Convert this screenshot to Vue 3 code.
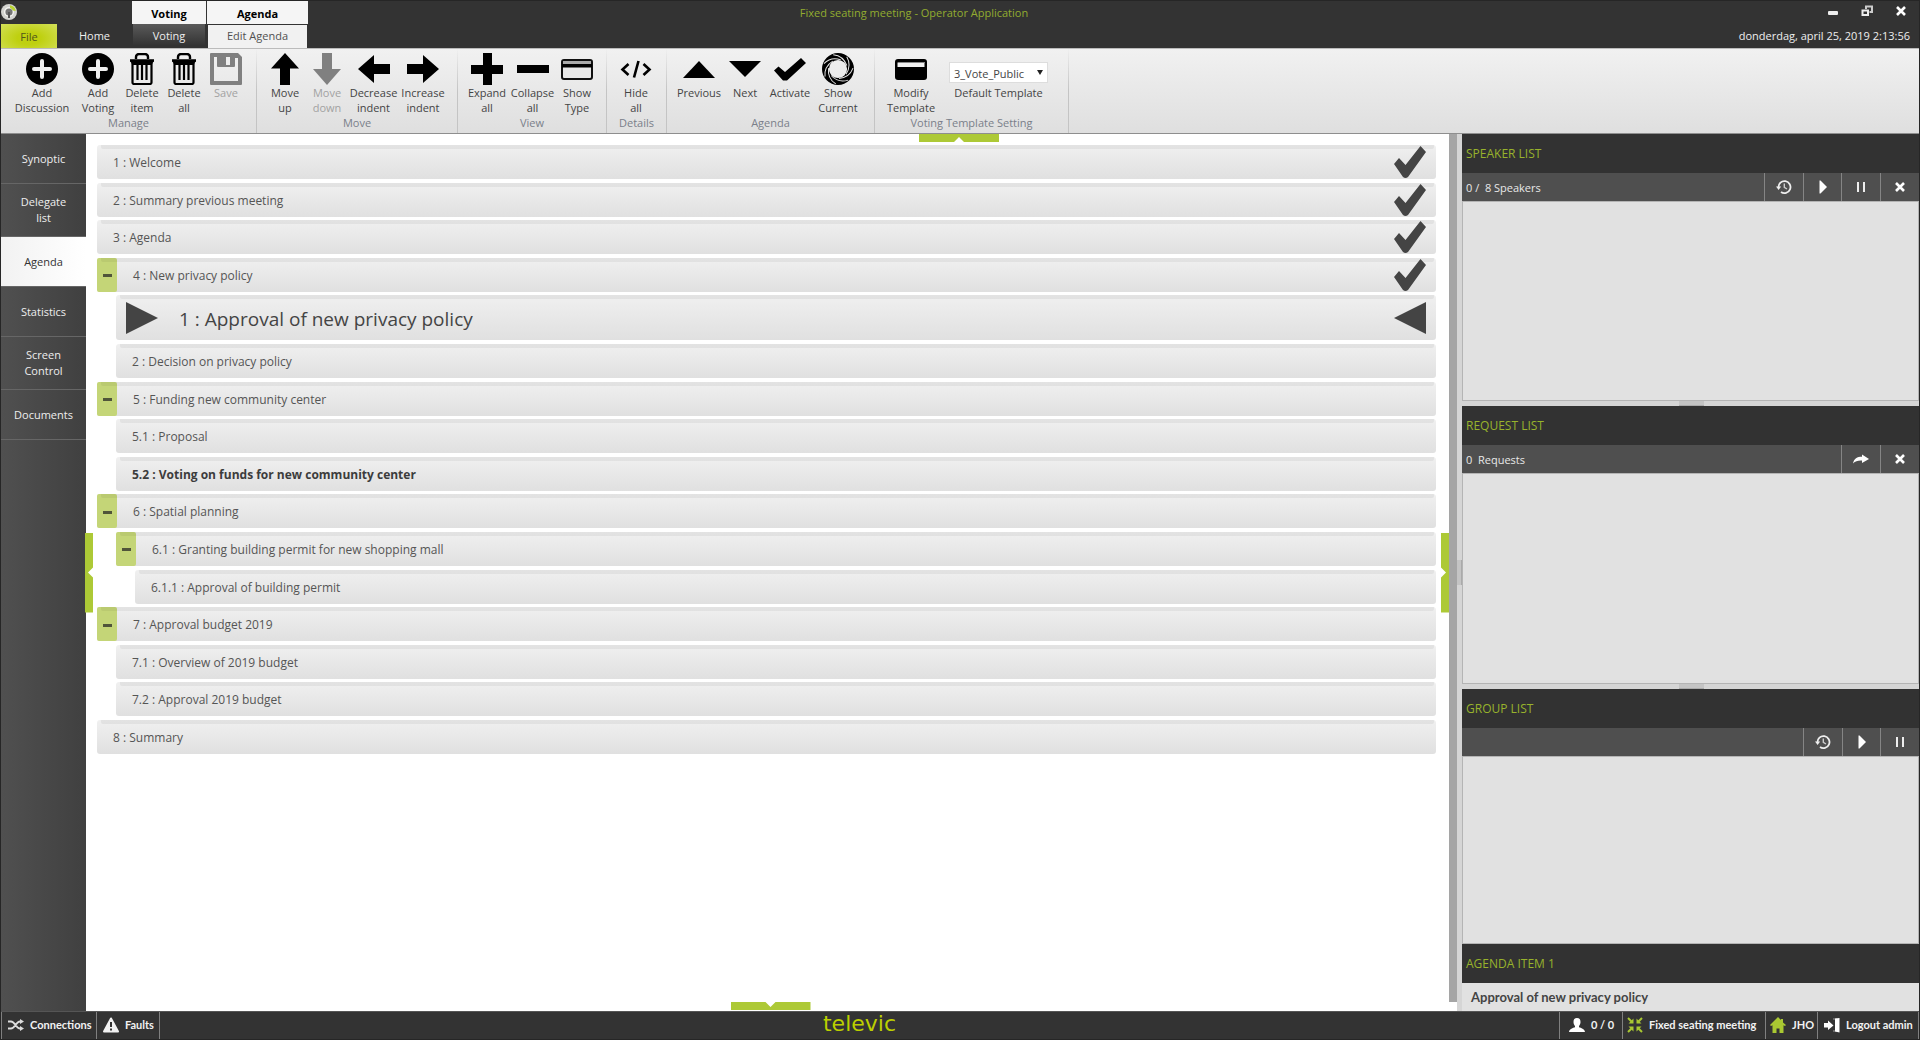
<script setup>
import { ref } from 'vue'

const template = ref('3_Vote_Public')

const groups = [
  {
    name: 'Manage',
    cls: 'manage',
    items: [
      { icon: 'add', lines: ['Add', 'Discussion'], w: 68 },
      { icon: 'add', lines: ['Add', 'Voting'], w: 44 },
      { icon: 'trash', lines: ['Delete', 'item'], w: 44 },
      { icon: 'trash', lines: ['Delete', 'all'], w: 40 },
      { icon: 'save', lines: ['Save'], w: 44, disabled: true },
    ],
  },
  {
    name: 'Move',
    cls: 'move',
    items: [
      { icon: 'up', lines: ['Move', 'up'], w: 42 },
      { icon: 'down', lines: ['Move', 'down'], w: 42, disabled: true },
      { icon: 'left', lines: ['Decrease', 'indent'], w: 51 },
      { icon: 'right', lines: ['Increase', 'indent'], w: 48 },
    ],
  },
  {
    name: 'View',
    cls: 'view',
    items: [
      { icon: 'plus', lines: ['Expand', 'all'], w: 44 },
      { icon: 'minus', lines: ['Collapse', 'all'], w: 47 },
      { icon: 'window', lines: ['Show', 'Type'], w: 42 },
    ],
  },
  { name: 'Details', cls: 'details', items: [{ icon: 'code', lines: ['Hide', 'all'], w: 44 }] },
  {
    name: 'Agenda',
    cls: 'agenda-group',
    items: [
      { icon: 'tri-up', lines: ['Previous'], w: 50 },
      { icon: 'tri-down', lines: ['Next'], w: 42 },
      { icon: 'check', lines: ['Activate'], w: 48 },
      { icon: 'swirl', lines: ['Show', 'Current'], w: 48 },
    ],
  },
]

const nav = [
  { label: 'Synoptic' },
  { label: 'Delegate list', tall: true },
  { label: 'Agenda', active: true },
  { label: 'Statistics' },
  { label: 'Screen Control', tall: true },
  { label: 'Documents' },
]

const rows = [
  { text: '1 : Welcome', level: 0, done: true },
  { text: '2 : Summary previous meeting', level: 0, done: true },
  { text: '3 : Agenda', level: 0, done: true },
  { text: '4 : New privacy policy', level: 0, done: true, parent: true },
  { text: '1 : Approval of new privacy policy', level: 1, current: true },
  { text: '2 : Decision on privacy policy', level: 1 },
  { text: '5 : Funding new community center', level: 0, parent: true },
  { text: '5.1 : Proposal', level: 1 },
  { text: '5.2 : Voting on funds for new community center', level: 1, bold: true },
  { text: '6 : Spatial planning', level: 0, parent: true },
  { text: '6.1 : Granting building permit for new shopping mall', level: 1, parent: true },
  { text: '6.1.1 : Approval of building permit', level: 2 },
  { text: '7 : Approval budget 2019', level: 0, parent: true },
  { text: '7.1 : Overview of 2019 budget', level: 1 },
  { text: '7.2 : Approval 2019 budget', level: 1 },
  { text: '8 : Summary', level: 0 },
]

const panels = [
  { title: 'SPEAKER LIST', cls: 'speakers', status: '0 /  8 Speakers', tools: ['history', 'play', 'pause', 'close'] },
  { title: 'REQUEST LIST', cls: 'requests', status: '0  Requests', tools: ['forward', 'close'] },
  { title: 'GROUP LIST', cls: 'groups', status: '', tools: ['history', 'play', 'pause'] },
]
</script>

<template>
  <svg class="sprite" aria-hidden="true">
    <symbol id="add" viewBox="0 0 32 32"><circle cx="16" cy="16" r="16" /><path d="M16 8v16M8 16h16" stroke="#eee" stroke-width="4" stroke-linecap="round" /></symbol>
    <symbol id="trash" viewBox="0 0 32 32">
      <path d="M10 6V4a3 3 0 0 1 3-3h6a3 3 0 0 1 3 3v2M4 7.500h24" fill="none" stroke="#000" stroke-width="2.400" />
      <path d="M6.500 11h19v18.500a1.500 1.500 0 0 1-1.500 1.500H8a1.500 1.500 0 0 1-1.500-1.500zM11.500 11v16M16 11v16M20.500 11v16" fill="none" stroke="#000" stroke-width="2.200" />
      <path d="M4 8l2 3h20l2-3z" />
    </symbol>
    <symbol id="save" viewBox="0 0 32 32"><path fill-rule="evenodd" d="M1 0h27l4 4v27a1 1 0 0 1-1 1H1a1 1 0 0 1-1-1V1a1 1 0 0 1 1-1zM4 4v24h24V5h-3v8a1 1 0 0 1-1 1H8a1 1 0 0 1-1-1V4zM16 4v8h4V4z" /></symbol>
    <symbol id="up" viewBox="0 0 32 32"><path d="M16 0l14 15.500h-9V32H11V15.500H2z" /></symbol>
    <symbol id="down" viewBox="0 0 32 32"><path d="M16 32L2 16h9V0h10v16h9z" /></symbol>
    <symbol id="left" viewBox="0 0 32 32"><path d="M0 16L16 2v9h16v10H16v9z" /></symbol>
    <symbol id="right" viewBox="0 0 32 32"><path d="M32 16L16 2v9H0v10h16v9z" /></symbol>
    <symbol id="plus" viewBox="0 0 32 32"><path d="M12 0h9v12h11v9H21v11h-9V21H0v-9h12z" /></symbol>
    <symbol id="minus" viewBox="0 0 32 32"><path d="M0 12h32v8H0z" /></symbol>
    <symbol id="window" viewBox="0 0 32 32"><rect x="1" y="7" width="30" height="19" rx="2" fill="#e9e9e9" stroke="#111" stroke-width="2" /><path d="M2 8h28v3H2z" fill="#aaa" /><path d="M1 11h30v3.500H1z" /></symbol>
    <symbol id="template" viewBox="0 0 32 32"><rect y="6" width="32" height="21" rx="3" /><path d="M2.500 9.500h27v4.500h-27z" fill="#f0f0f0" /><path d="M3 9h27v1H3z" fill="#888" /></symbol>
    <symbol id="code" viewBox="0 0 32 32"><path d="M8.500 11L2.500 16.500l6 5.500M23.500 11l6 5.500-6 5.500M18.500 8L14 24.500" fill="none" stroke="#000" stroke-width="2.600" /></symbol>
    <symbol id="tri-up" viewBox="0 0 32 32"><path d="M16 8l16 17H0z" /></symbol>
    <symbol id="tri-down" viewBox="0 0 32 32"><path d="M0 8h32L16 24z" /></symbol>
    <symbol id="check" viewBox="0 0 32 32"><path d="M0 17.500l4.500-4L11 19 27 5l5 5-19 17.500h-4z" /></symbol>
    <symbol id="done" viewBox="0 0 32 32"><path d="M0 18l5-6 6.500 7L26.500 0 32 6 14 31q-2.500 2-5 0z" /></symbol>
    <symbol id="swirl" viewBox="0 0 32 32">
      <circle cx="16" cy="16" r="13" fill="none" stroke="#000" stroke-width="6" />
      <circle cx="16" cy="16" r="9.800" fill="none" stroke="#000" stroke-width="1.400" />
      <g fill="none" stroke="#e4e4e4" stroke-width="1">
        <path v-for="n in 7" :key="n" d="M12 1.500Q22 3 25 13" :transform="`rotate(${n * 51} 16 16)`" />
      </g>
    </symbol>
    <symbol id="history" viewBox="0 0 16 16"><path d="M2.500 8.500A6 6 0 1 1 5 13" fill="none" stroke="#eee" stroke-width="1.800" /><path d="M0 7.500h5.200L2.600 11z" fill="#eee" /><path d="M8.300 4.500V8.300L11 10" fill="none" stroke="#ccc" stroke-width="1.400" /></symbol>
    <symbol id="play" viewBox="0 0 16 16"><path d="M4.500 1.500h1L12 8l-6.500 6.500h-1z" fill="#fff" /></symbol>
    <symbol id="pause" viewBox="0 0 16 16"><path d="M4 3h2v10H4zM10 3h2v10h-2z" fill="#eee" /></symbol>
    <symbol id="close" viewBox="0 0 16 16"><path d="M4 4l8 8M12 4l-8 8" stroke="#fff" stroke-width="2.600" /></symbol>
    <symbol id="forward" viewBox="0 0 16 16"><path d="M0 12.500C1 7.500 4 5.800 9 5.800V3.500l7 4.500-7 4V9.500C5 9.300 2.500 10 0 12.500z" fill="#fff" /></symbol>
    <symbol id="shuffle" viewBox="0 0 16 16"><path d="M0 4.500h3c4 0 5 7 9 7h1M0 11.500h3c4 0 5-7 9-7h1" fill="none" stroke="#ddd" stroke-width="1.800" /><path d="M12 2l4 2.500L12 7zM12 9l4 2.500-4 2.500z" fill="#ddd" /></symbol>
    <symbol id="warning" viewBox="0 0 16 16"><path d="M8 1.500L15 14.500H1z" fill="#f2f2f2" stroke="#f2f2f2" stroke-width="2" stroke-linejoin="round" /><path d="M8 5v5M8 11.500v2" stroke="#333" stroke-width="2" /></symbol>
    <symbol id="person" viewBox="0 0 16 16"><path d="M8 1c2.500 0 3.500 1.500 3.500 4 0 1.800-.7 3-1.500 4v1.200c2 .8 5.500 1.300 6 4.800H0c.5-3.500 4-4 6-4.800V9c-.8-1-1.500-2.200-1.500-4 0-2.500 1-4 3.500-4z" fill="#fff" /></symbol>
    <symbol id="shrink" viewBox="0 0 16 16"><path d="M1 1l4 4M15 1l-4 4M1 15l4-4M15 15l-4-4" stroke="#a9c832" stroke-width="2" /><path d="M6.500 1.500v5h-5zM9.500 1.500v5h5zM6.500 14.500v-5h-5zM9.500 14.500v-5h5z" fill="#a9c832" /></symbol>
    <symbol id="home" viewBox="0 0 16 16"><path d="M8 0l3 3V2h2v3.500L16 8l-1 1-1.500-.7V16h-4v-4.500h-3V16h-4V8.300L1 9 0 8z" fill="#a9c832" /></symbol>
    <symbol id="logout" viewBox="0 0 16 16"><path d="M0 6h4V3.500L9.500 8.500 4 13v-2.500H0z" fill="#fff" /><path d="M9 2h4v12H9" fill="none" stroke="#999" stroke-width="1" /><path d="M11 1.500L15.500 1v14.500L11 14.500z" fill="#fff" /></symbol>
  </svg>

  <div class="app">
    <header class="titlebar">
      <svg class="logo" viewBox="0 0 16 16"><circle cx="8" cy="8" r="8" fill="#d4d4d0" /><circle cx="8" cy="8" r="5" fill="#f4f4f0" /><path d="M9 1.200A7 7 0 0 1 14.800 7l-3-.5A4 4 0 0 0 9 4z" fill="#b8d432" /><circle cx="8" cy="8" r="3.600" fill="#777" /><path d="M7 8h2v6H7z" fill="#555" /></svg>
      <nav class="tabs">
        <button class="tab file">File</button>
        <button class="tab home">Home</button>
        <div class="context voting">
          <strong>Voting</strong>
          <button class="tab">Voting</button>
        </div>
        <div class="context agenda">
          <strong>Agenda</strong>
          <button class="tab">Edit Agenda</button>
        </div>
      </nav>
      <h1>Fixed seating meeting - Operator Application</h1>
      <div class="session">
        <div class="controls">
          <button aria-label="Minimize"><svg viewBox="0 0 12 12"><rect x="1" y="6" width="10" height="4" rx="1" fill="#eee" /></svg></button>
          <button aria-label="Restore"><svg viewBox="0 0 12 12"><path d="M5 4V1.500h6V7H8.500" fill="none" stroke="#ccc" stroke-width="2" /><path d="M1.500 5.500h5.500v4.500H1.500z" fill="#333" stroke="#eee" stroke-width="2" /></svg></button>
          <button aria-label="Close"><svg viewBox="0 0 12 12"><path d="M2 2l8 8M10 2l-8 8" stroke="#fff" stroke-width="2.600" /></svg></button>
        </div>
        <time>donderdag, april 25, 2019 2:13:56</time>
      </div>
    </header>

    <section class="ribbon">
      <div v-for="g in groups" :key="g.name" class="group" :class="g.cls">
        <div class="actions">
          <button v-for="a in g.items" :key="a.lines.join(' ')" class="action" :style="{ width: a.w + 'px' }" :disabled="a.disabled">
            <svg><use :href="'#' + a.icon" /></svg>
            <span v-for="l in a.lines" :key="l">{{ l }}</span>
          </button>
        </div>
        <div class="group-name">{{ g.name }}</div>
      </div>
      <div class="group setting">
        <div class="actions">
          <button class="action modify">
            <svg><use href="#template" /></svg>
            <span>Modify</span><span>Template</span>
          </button>
          <div class="picker">
            <div class="combo">
              <select id="default-template" v-model="template">
                <option>3_Vote_Public</option>
              </select>
              <svg viewBox="0 0 6 5"><path d="M0 0h6L3 5z" fill="#222" /></svg>
            </div>
            <label for="default-template">Default Template</label>
          </div>
        </div>
        <div class="group-name">Voting Template Setting</div>
      </div>
    </section>

    <div class="body">
      <nav class="sidebar">
        <button v-for="n in nav" :key="n.label" :class="{ tall: n.tall, active: n.active }"><span>{{ n.label }}</span></button>
      </nav>

      <main class="workspace">
        <ul class="list">
          <li v-for="r in rows" :key="r.text" class="row" :class="['level' + r.level, { current: r.current, bold: r.bold }]">
            <button v-if="r.parent" class="toggle" aria-label="Collapse"></button>
            <svg v-if="r.current" class="marker start" viewBox="0 0 32 32"><path d="M0 0l32 16L0 32z" /></svg>
            <span class="label">{{ r.text }}</span>
            <svg v-if="r.done" class="marker"><use href="#done" /></svg>
            <svg v-if="r.current" class="marker" viewBox="0 0 32 32"><path d="M32 0L0 16l32 16z" /></svg>
          </li>
        </ul>
        <button class="handle top" aria-label="Top panel"></button>
        <button class="handle bottom" aria-label="Bottom panel"></button>
        <button class="handle west" aria-label="Left panel"></button>
        <button class="handle east" aria-label="Right panel"></button>
      </main>

      <div class="scroll"></div>
      <div class="splitter"></div>

      <aside class="side">
        <section v-for="p in panels" :key="p.title" class="panel" :class="p.cls">
          <h2>{{ p.title }}</h2>
          <div class="toolbar">
            <span class="status">{{ p.status }}</span>
            <button v-for="t in p.tools" :key="t" :class="t" :aria-label="t"><svg><use :href="'#' + t" /></svg></button>
          </div>
          <div class="content"></div>
        </section>
        <section class="item">
          <h2>AGENDA ITEM 1</h2>
          <p>Approval of new privacy policy</p>
        </section>
      </aside>
    </div>

    <footer class="footer">
      <div class="links">
        <button class="connections"><svg><use href="#shuffle" /></svg>Connections</button>
        <button class="faults"><svg><use href="#warning" /></svg>Faults</button>
      </div>
      <span class="brand">televic</span>
      <div class="links right">
        <button class="count"><svg><use href="#person" /></svg>0 / 0</button>
        <button class="meeting"><svg><use href="#shrink" /></svg>Fixed seating meeting</button>
        <button class="user"><svg><use href="#home" /></svg>JHO</button>
        <button class="logout"><svg><use href="#logout" /></svg>Logout admin</button>
      </div>
    </footer>
  </div>
</template>

<style>
body { background: #262626; }
</style>

<style scoped>
* { box-sizing: border-box; }
button { margin: 0; padding: 0; border: 0; background: none; color: inherit; font: inherit; cursor: pointer; }
h1, h2, p, ul { margin: 0; padding: 0; font-weight: 400; list-style: none; }
svg { display: block; flex: none; }
.sprite { position: absolute; width: 0; height: 0; }
.app { display: flex; flex-direction: column; min-height: 100vh; padding: 1px; font: 11px/15px "Open Sans", "Noto Sans", sans-serif; color: #444; background: #262626; }

.titlebar { position: relative; display: flex; height: 47px; background: #333; color: #eee; }
.logo { position: absolute; left: 0; top: 3px; width: 16px; height: 16px; }
.tabs { display: flex; align-items: flex-end; }
.tab { height: 24px; padding-bottom: 2px; text-align: center; }
.file { width: 56px; padding: 0; color: #50551c; background: radial-gradient(ellipse at 50% 60%, #bfd010 30%, #d3e05a); }
.home { width: 75px; }
.context { display: flex; flex-direction: column; align-items: center; height: 47px; margin-right: 1px; }
.context strong { width: 100%; height: 23px; line-height: 26px; text-align: center; color: #000; background: #f5f5f5; }
.voting { width: 74px; }
.agenda { width: 101px; }
.voting .tab { width: 72px; background: linear-gradient(#5a5a5a, #333 90%); }
.agenda .tab { width: 99px; margin-top: 1px; height: 23px; color: #505050; background: #f1f1f1; }
h1 { flex: 1; font-size: 11px; line-height: 24px; text-align: center; color: #92ac30; }
.session { display: flex; flex-direction: column; align-items: flex-end; width: 400px; padding-right: 9px; }
.controls { display: flex; gap: 22px; height: 20px; padding-right: 3px; }
.controls svg { width: 12px; height: 12px; }
time { margin-top: 7px; }

.ribbon { display: flex; height: 86px; background: linear-gradient(#f1f1f1, #dfdfdf); border-top: 1px solid #bbb; border-bottom: 1px solid #8e8e8e; }
.group { display: flex; flex-direction: column; height: 84px; border-style: solid; border-width: 0 1px 0 0; border-image: linear-gradient(transparent, #c4c4c4 50%) 1; }
.actions { display: flex; flex: 1; padding: 4px 0 0 7px; }
.action { display: flex; flex-direction: column; align-items: center; justify-content: flex-start; white-space: nowrap; }
.action svg { width: 32px; height: 32px; fill: #000; }
.action:disabled { color: #a2a2a2; }
.action:disabled svg { fill: #808080; }
.group-name { height: 18px; text-align: center; color: #7a7f8a; }
.manage { width: 256px; }
.move { width: 201px; }
.view { width: 149px; }
.details { width: 60px; }
.agenda-group { width: 208px; }
.setting { width: 194px; }
.modify { width: 58px; }
.picker { display: flex; flex-direction: column; padding: 9px 0 0 9px; }
.combo { position: relative; width: 99px; height: 21px; }
.combo select { width: 99px; height: 21px; padding: 1px 4px 0; border: 1px solid #ddd; border-radius: 0; appearance: none; background: #fff; color: #444; font: inherit; }
.combo svg { position: absolute; right: 5px; top: 8px; width: 6px; height: 5px; }
.picker label { margin-top: 2px; text-align: center; }

.body { display: flex; flex: 1; }
.sidebar { width: 85px; background: linear-gradient(90deg, #505050, #404040); color: #eee; line-height: 16px; }
.sidebar button { display: flex; align-items: center; justify-content: center; width: 100%; height: 50px; border-bottom: 1px solid #666; }
.sidebar .tall { height: 53px; }
.sidebar .tall span { width: 56px; }
.sidebar .active { color: #333; background: linear-gradient(90deg, #f2f2f2, #fff); }

.workspace { position: relative; flex: 1; padding: 11px 13px 0 11px; background: #fff; }
.list { display: flex; flex-direction: column; justify-content: space-between; height: 609px; }
.row { position: relative; display: flex; align-items: center; height: 34px; padding: 0 10px 0 0; border-radius: 3px; background: linear-gradient(#f0f0f0, #e0e0e0); }
.row::before { content: ""; position: absolute; left: 4px; right: 2px; top: 0; height: 4px; border-radius: 0 0 2px 2px; background: rgba(0, 0, 0, .05); }
.level1 { margin-left: 19px; }
.level2 { margin-left: 38px; }
.label { flex: 1; margin-left: 16px; padding-top: 2px; font-size: 12px; line-height: 18px; color: #555; }
.toggle { display: flex; align-items: center; justify-content: center; width: 20px; height: 34px; border-radius: 2px; background: #c4d577; }
.toggle::before { content: ""; width: 9px; height: 3px; margin-top: 2px; background: #50553a; }
.bold .label { font-weight: 700; color: #3c3c3c; }
.marker { position: relative; width: 32px; height: 32px; fill: #444; }
.current { height: 45px; }
.current .label { margin-left: 21px; font-size: 19px; line-height: 28px; color: #444; }
.marker.start { margin-left: 10px; }

.handle { position: absolute; background: #adc936; }
.top { top: 0; left: calc(50vw - 127px); width: 80px; height: 8px; clip-path: polygon(0 0, 100% 0, 100% 100%, 45px 100%, 40px 3px, 35px 100%, 0 100%); }
.bottom { bottom: 1px; left: calc(50% - 37px); width: 80px; height: 8px; clip-path: polygon(0 0, 35px 0, 40px 5px, 45px 0, 100% 0, 100% 100%, 0 100%); }
.west, .east { top: calc(50% - 40px); width: 8px; height: 80px; }
.west { left: -1px; clip-path: polygon(0 0, 100% 0, 100% 35px, 3px 40px, 100% 45px, 100% 100%, 0 100%); }
.east { right: 0; clip-path: polygon(0 0, 100% 0, 100% 100%, 0 100%, 0 45px, 5px 40px, 0 35px); }
.scroll { width: 8px; margin-bottom: 9px; background: #a5a5a5; box-shadow: 0 9px #fff; }
.splitter { display: flex; align-items: center; width: 5px; background: #d5d5d5; }
.splitter::before { content: ""; width: 4px; height: 25px; border-right: 1px solid #aaa; background: #c4c4c4; }

.side { display: flex; flex-direction: column; width: 457px; background: #d5d5d5; }
h2 { height: 39px; padding-left: 4px; font-size: 12px; line-height: 40px; color: #98b32c; background: #323232; }
.panel { position: relative; display: flex; flex-direction: column; }
.speakers { flex: 1 0 272px; padding-bottom: 5px; }
.requests { flex: 1 0 283px; padding-bottom: 5px; }
.groups { flex: 1 0 255px; }
.speakers::after, .requests::after { content: ""; position: absolute; bottom: 0; left: calc(50% - 12px); width: 25px; height: 4px; border-bottom: 1px solid #aaa; background: #c4c4c4; }
.toolbar { display: flex; align-items: center; height: 28px; background: #4f4f4f; color: #e8e8e8; }
.status { flex: 1; padding-left: 4px; white-space: pre; }
.toolbar button { display: flex; align-items: center; justify-content: center; width: 39px; height: 28px; border-left: 1px solid #858585; }
.toolbar .play { width: 38px; }
.toolbar svg { width: 16px; height: 16px; }
.content { flex: 1; background: #e1e1e1; border: 1px solid #b4b4b4; }
.item p { height: 28px; padding-left: 9px; font: 700 13px/28px Lato, sans-serif; color: #444; background: #e1e1e1; }

.footer { display: flex; justify-content: space-between; height: 28px; background: #333; border-top: 1px solid #555; color: #f2f2f2; font: 700 11px/26px Lato, sans-serif; }
.links { display: flex; }
.links button { display: flex; align-items: center; padding-bottom: 2px; border-right: 1px solid #808080; white-space: nowrap; }
.links svg { width: 16px; height: 16px; }
.links .connections { width: 96px; padding-left: 6px; gap: 6px; border-left: 1px solid #808080; }
.links .faults { width: 63px; padding-left: 6px; gap: 6px; }
.brand { font: 22px/24px "DejaVu Sans", sans-serif; color: #bccf00; }
.right .count { width: 64px; padding-left: 9px; gap: 6px; border-left: 1px solid #808080; }
.right .meeting { width: 143px; padding-left: 4px; gap: 6px; }
.right .user { width: 52px; padding-left: 4px; gap: 6px; }
.right .logout { width: 101px; padding-left: 6px; gap: 6px; }
</style>
